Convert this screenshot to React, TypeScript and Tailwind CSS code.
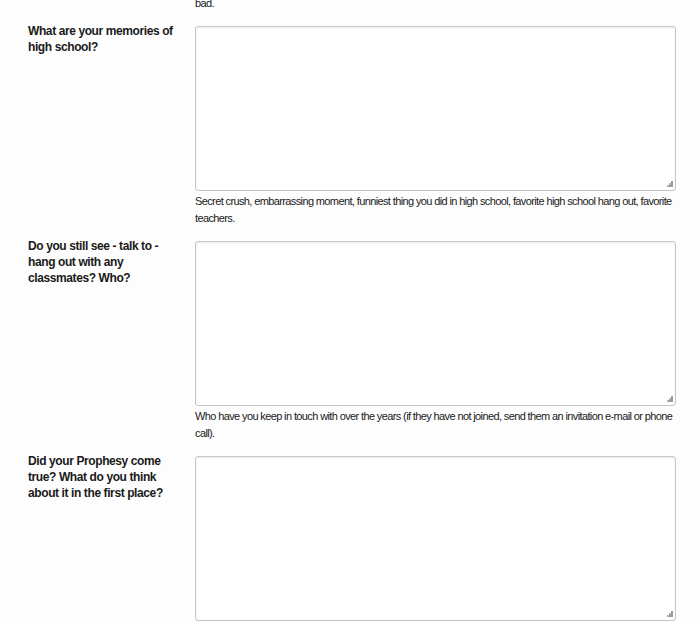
import React from "react";

const Grip = () => (
  <svg
    className="absolute right-[3px] bottom-[3px]"
    width="7"
    height="7"
    viewBox="0 0 7 7"
  >
    <rect x="5" y="0" width="2" height="2" fill="#9a9a9a" />
    <rect x="3" y="2" width="2" height="2" fill="#b0b0b0" />
    <rect x="5" y="2" width="2" height="2" fill="#9a9a9a" />
    <rect x="1" y="4" width="2" height="2" fill="#b0b0b0" />
    <rect x="3" y="4" width="2" height="2" fill="#9a9a9a" />
    <rect x="5" y="4" width="2" height="2" fill="#9a9a9a" />
  </svg>
);

type Q = { label: string; help: string };

const questions: Q[] = [
  {
    label: "What are your memories of high school?",
    help: "Secret crush, embarrassing moment, funniest thing you did in high school, favorite high school hang out, favorite teachers.",
  },
  {
    label: "Do you still see - talk to - hang out with any classmates? Who?",
    help: "Who have you keep in touch with over the years (if they have not joined, send them an invitation e-mail or phone call).",
  },
  {
    label: "Did your Prophesy come true? What do you think about it in the first place?",
    help: "",
  },
];

export default function App() {
  return (
    <div className="w-[700px] h-[622px] overflow-hidden bg-[#fdfdfd] text-[#1a1a1a] font-['Liberation_Sans',Arial,sans-serif]">
      <div className="-mt-[5px] pl-[195px] text-[11px] leading-[17px] tracking-[-0.6px]">bad.</div>
      <div className="flex flex-col pl-[28px] pt-[11px]">
        {questions.map((q, i) => (
          <div key={i} className="flex pb-[11px]">
            <div className="w-[167px] shrink-0 pr-[14px] text-[12px] font-bold leading-[16px] tracking-[-0.4px]">
              {q.label}
            </div>
            <div className="w-[481px] pt-[3px]">
              <div className="relative">
                <textarea className="block w-[481px] h-[165px] resize-none rounded-[3px] border border-[#c6c6c6] bg-white shadow-[inset_0_1px_2px_rgba(0,0,0,0.08)] outline-none" />
                <Grip />
              </div>
              {q.help && (
                <div className="mt-[2px] text-[11px] leading-[17px] tracking-[-0.62px]">{q.help}</div>
              )}
            </div>
          </div>
        ))}
      </div>
    </div>
  );
}
